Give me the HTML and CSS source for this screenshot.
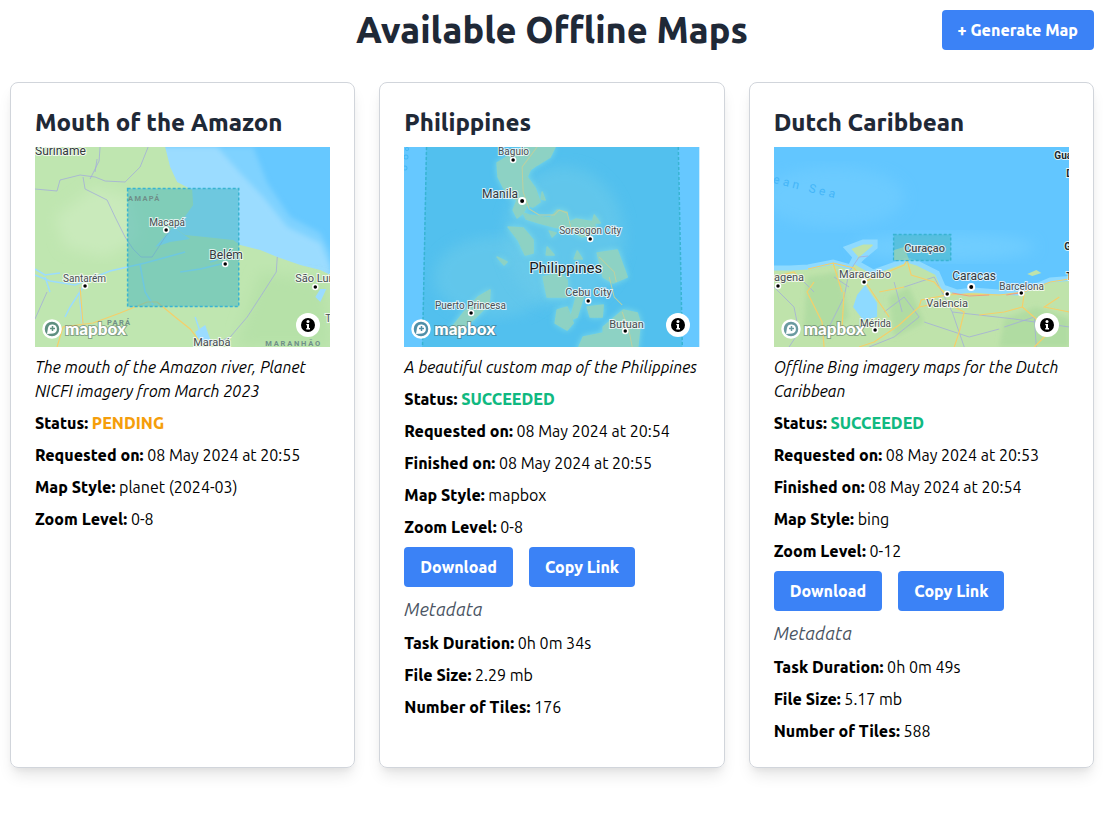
FILE: index.html
```html
<!DOCTYPE html>
<html>
	<head>
		<meta charset="UTF-8">
		<title>Available Offline Maps</title>
		<link rel="stylesheet" href="styles.css">
	</head>
	<body>
		<svg class="defs" width="0" height="0">
			<filter id="soft"><feGaussianBlur stdDeviation="0.4"/></filter>
			<filter id="blur"><feGaussianBlur stdDeviation="2.500"/></filter>
			<filter id="haze"><feGaussianBlur stdDeviation="7"/></filter>
		</svg>
		<header class="topbar">
			<h1>Available Offline Maps</h1>
			<button class="btn generate">+ Generate Map</button>
		</header>
		<main class="cards">
			<section class="card">
				<h2>Mouth of the Amazon</h2>
				<div class="map">
					<svg viewBox="0 0 295 200" preserveAspectRatio="none" width="100%" height="200">
						<rect width="295" height="200" fill="#66c8ff"/>
						<path d="M218 0L232 36L255 70L285 86L295 106V200H0V0Z" fill="#7fd2ff" filter="url(#blur)"/>
						<path d="M182 0L205 26L228 50L252 80L285 96L295 120V200H0V0Z" fill="#9bdcff" filter="url(#blur)"/>
						<g filter="url(#soft)">
							<path d="M130 0L135 20L142 35L157 43L158 58L148 72L138 80L150 88L170 90L198 93L205 98L225 103L242 110L265 118L285 123L295 128V200H0V0Z" fill="#bfe6b0"/>
							<path d="M60 40L95 50L105 90L70 110L30 100L20 70Z" fill="#c9eabb" filter="url(#haze)"/>
							<path d="M225 125L290 135L295 200H200Z" fill="#b6e1a8" filter="url(#haze)"/>
							<path d="M0 128L15 134L40 138L75 124L110 116L150 105" class="river"/>
							<path d="M45 140L45 155L48 180M48 140L35 160L30 170M105 118L110 145L118 158M145 125L165 122L190 116M175 115L190 110M160 170L165 185L178 195M10 130L15 145M0 122L10 128L25 126" class="river"/>
							<path d="M160 185L170 178L176 195L165 198Z" fill="#9bdcff"/>
							<path d="M280 150L285 142L291 142L285 155Z" fill="#9bdcff"/>
							<path d="M120 100L138 80L155 92L135 95Z" fill="#9bdcff"/>
							<g class="border">
								<path d="M0 42L22 44L25 33L45 28L60 30L70 34L90 35L105 20L113 0"/>
								<path d="M48 30L50 42L72 53L80 70L90 90L98 102L106 110L117 110L130 90L135 84"/>
								<path d="M65 0L64 14L55 32M62 12L60 25"/>
								<path d="M242 110L241 125L225 150L212 170L195 190L170 200"/>
								<path d="M0 172L12 145"/>
							</g>
							<path class="road" d="M22 200L28 180L58 176L85 166L112 155L122 155L140 170L155 182L165 195L175 200M45 140L48 178"/>
						</g>
						<rect class="bbox" x="92.500" y="41.500" width="111" height="118"/>
						<text class="region" x="93" y="54">AMAPÁ</text>
						<text class="region" x="72" y="178">PARÁ</text>
						<text class="region wide" x="230" y="199">MARANHÃO</text>
						<text class="place" x="114" y="79">Macapá</text>
						<circle class="dot" cx="131" cy="83" r="2.500"/>
						<text class="place big" x="174" y="112">Belém</text>
						<circle class="dot" cx="190" cy="117" r="2.500"/>
						<text class="place" x="28" y="135">Santarém</text>
						<circle class="dot" cx="50" cy="139" r="2.500"/>
						<text class="place big-sm" x="260" y="135">São Luís</text>
						<circle class="dot" cx="280" cy="140" r="2.500"/>
						<text class="place big-sm" x="158" y="199">Marabá</text>
						<text class="place big" x="0" y="8">Suriname</text>
						<text class="place" x="290" y="175">T</text>
					</svg>
					<div class="logo">
						<svg class="logo-mark" viewBox="0 0 20 20" width="20" height="20"><circle cx="10" cy="10" r="8.500" fill="#5f8f80" stroke="white" stroke-width="2.500"/><path d="M5 15L6 9A4.500 4.500 0 1 1 11 14.500Z" fill="white"/><path d="M10.500 7V12M8 9.500H13" stroke="#5f8f80" stroke-width="1.500"/></svg>
						<span class="logo-text">mapbox</span>
					</div>
					<svg class="info" viewBox="0 0 24 24" width="24" height="24"><circle cx="12" cy="12" r="12" fill="white"/><circle cx="12" cy="12" r="7" fill="black"/><circle cx="12" cy="8.500" r="1.500" fill="white"/><path d="M10.300 11H13V15H14V16.500H10.300V15H11V12.300H10.300Z" fill="white"/></svg>
				</div>
				<p class="desc">The mouth of the Amazon river, Planet NICFI imagery from March 2023</p>
				<p><b>Status:</b> <b class="pending">PENDING</b></p>
				<p><b>Requested on:</b> 08 May 2024 at 20:55</p>
				<p><b>Map Style:</b> planet (2024-03)</p>
				<p><b>Zoom Level:</b> 0-8</p>
			</section>
			<section class="card">
				<h2>Philippines</h2>
				<div class="map">
					<svg viewBox="0 0 295 200" preserveAspectRatio="none" width="100%" height="200">
						<rect width="295" height="200" fill="#66c8ff"/>
						<path d="M22 0L18 200H278L274 0Z" fill="#52c0ee"/>
						<ellipse cx="90" cy="130" rx="60" ry="40" fill="#6ccbea" opacity=".6" filter="url(#haze)"/>
						<ellipse cx="160" cy="90" rx="60" ry="70" fill="#6ccbea" opacity=".6" filter="url(#haze)"/>
						<g class="isles">
							<path d="M136 0L151 0L146 10L133 18L126 23L123 30L131 41L136 55L129 60L123 58L119 66L113 71L109 63L113 53L106 50L99 40L94 30L93 16L98 13L109 6L123 0Z"/>
							<path d="M119 66L125 68L146 71L153 63L163 65L163 76L172 72L190 75L192 85L178 90L170 85L160 82L150 80L135 76L122 72Z"/>
							<path d="M104 80L119 81L129 93L129 106L121 108L114 93Z"/>
							<path d="M193 106L213 103L223 130L209 136L199 130Z"/>
							<path d="M139 130L156 126L163 133L163 150L143 150Z"/>
							<path d="M173 146L179 150L173 170L166 173Z"/>
							<path d="M183 160L199 158L198 170L186 170Z"/>
							<path d="M153 163L163 160L169 176L163 183L151 176Z"/>
							<path d="M199 180L219 163L233 166L236 176L233 204H173L179 190L199 186Z"/>
							<path d="M86 143L74 150L60 165L46 183L52 187L70 172L85 157Z"/>
							<path d="M93 110L103 115L100 118ZM138 45L141 53L137 52ZM190 68L196 76L188 76ZM173 104L178 112L170 112ZM143 100L150 108L142 108ZM145 84L152 86L148 90Z"/>
						</g>
						<path class="road-muted" d="M133 0L118 20L119 45L125 62L135 68L150 68L155 63L163 66L167 82M195 110L210 125L212 135M205 130L210 150L218 158M218 165L225 185L228 200"/>
						<g class="speck">
							<circle cx="3" cy="2" r="1.500"/><circle cx="2" cy="10" r="2"/><circle cx="1" cy="21" r="2"/>
						</g>
						<path class="bbox" d="M22.500 0L18.500 200M274 0L278 200"/>
						<text class="place" x="94" y="8">Baguio</text>
						<circle class="dot" cx="109" cy="13" r="2.500"/>
						<text class="place big" x="78" y="51">Manila</text>
						<circle class="capital" cx="118" cy="54" r="3"/>
						<text class="place" x="155" y="87">Sorsogon City</text>
						<circle class="dot" cx="186" cy="92" r="2.500"/>
						<text class="place large" x="125" y="126">Philippines</text>
						<text class="place big-sm" x="161" y="149">Cebu City</text>
						<circle class="dot" cx="184" cy="154" r="2.500"/>
						<text class="place" x="31" y="162">Puerto Princesa</text>
						<circle class="dot" cx="67" cy="166" r="2.500"/>
						<text class="place big-sm" x="205" y="181">Butuan</text>
						<circle class="dot" cx="221" cy="184" r="2.500"/>
					</svg>
					<div class="logo">
						<svg class="logo-mark" viewBox="0 0 20 20" width="20" height="20"><circle cx="10" cy="10" r="8.500" fill="#4f8fa8" stroke="white" stroke-width="2.500"/><path d="M5 15L6 9A4.500 4.500 0 1 1 11 14.500Z" fill="white"/><path d="M10.500 7V12M8 9.500H13" stroke="#4f8fa8" stroke-width="1.500"/></svg>
						<span class="logo-text">mapbox</span>
					</div>
					<svg class="info" viewBox="0 0 24 24" width="24" height="24"><circle cx="12" cy="12" r="12" fill="white"/><circle cx="12" cy="12" r="7" fill="black"/><circle cx="12" cy="8.500" r="1.500" fill="white"/><path d="M10.300 11H13V15H14V16.500H10.300V15H11V12.300H10.300Z" fill="white"/></svg>
				</div>
				<p class="desc">A beautiful custom map of the Philippines</p>
				<p><b>Status:</b> <b class="succeeded">SUCCEEDED</b></p>
				<p><b>Requested on:</b> 08 May 2024 at 20:54</p>
				<p><b>Finished on:</b> 08 May 2024 at 20:55</p>
				<p><b>Map Style:</b> mapbox</p>
				<p><b>Zoom Level:</b> 0-8</p>
				<div class="actions">
					<button class="btn">Download</button>
					<button class="btn">Copy Link</button>
				</div>
				<h3>Metadata</h3>
				<p><b>Task Duration:</b> 0h 0m 34s</p>
				<p><b>File Size:</b> 2.29 mb</p>
				<p><b>Number of Tiles:</b> 176</p>
			</section>
			<section class="card">
				<h2>Dutch Caribbean</h2>
				<div class="map">
					<svg viewBox="0 0 295 200" preserveAspectRatio="none" width="100%" height="200">
						<rect width="295" height="200" fill="#62c6ff"/>
						<ellipse cx="60" cy="50" rx="70" ry="30" fill="#6ccbff" filter="url(#haze)"/>
						<ellipse cx="170" cy="100" rx="90" ry="14" fill="#70cdff" filter="url(#haze)"/>
						<path class="coast" d="M-5 121L16 121L34 120L59 115L76 120L81 110L73 101L89 95L101 95L101 100L89 110L83 116L99 125L133 113L143 116L163 126L169 140L183 145L199 143L224 145L243 146L259 140L276 133L300 131V205H-5Z"/>
						<g filter="url(#soft)">
							<g fill="#b0dca2" filter="url(#blur)">
								<path d="M33 130L65 125L75 170L50 192L30 180Z"/>
								<path d="M230 172L262 160L295 172V200H225Z"/>
								<path d="M115 150L135 140L150 175L120 190Z"/>
							</g>
							<path d="M91 138L103 156L103 170L89 173L79 160L83 148Z" fill="#8edaff"/>
							<path d="M253 127L262 123L267 126L258 129Z" fill="#bfe3ab"/>
							<g class="border">
								<path d="M94 109L85 110L75 125L70 150L60 170L50 190"/>
								<path d="M0 140L20 160L25 185L15 200M25 130L40 145M110 165L130 150L145 170L120 190L95 200"/>
								<path d="M130 140L160 130L178 165L190 200M178 165L240 172L295 180M230 180L260 170L262 200"/>
								<path d="M150 175L195 190L225 182M60 130L75 140M120 135L128 165"/>
							</g>
							<g class="road">
								<path d="M34 122L59 116L80 121L90 133L100 148L115 170M90 135L130 118L133 113L137 128L160 135L172 148L147 153L145 160L125 178L100 195L85 200"/>
								<path d="M172 148L195 147L225 148L250 145L276 135L295 132M250 146L248 160L262 172L275 185L260 200"/>
								<path d="M145 160L170 155L190 165L185 185L180 200M205 168L230 165L248 160M40 135L33 145L48 175L50 200"/>
								<path d="M70 145L68 180M59 116L68 145M105 145L130 140M0 130L20 125L28 135M285 150L270 160L295 165"/>
							</g>
							<path class="road road-red" d="M178 146L195 149L215 148M232 148L245 146"/>
						</g>
						<text class="sea" transform="rotate(14 0 30)" x="0" y="36">ean Sea</text>
						<rect class="bbox" x="119.500" y="87.500" width="57" height="26"/>
						<path d="M120 113L120 103L130 100L135 113Z" fill="#a0d6b0" opacity=".7"/>
						<text class="place medium" x="130" y="105">Curaçao</text>
						<text class="place big-sm" x="0" y="134">agena</text>
						<circle class="dot" cx="4" cy="139" r="2.500"/>
						<text class="place big-sm" x="65" y="131">Maracaibo</text>
						<circle class="dot" cx="90" cy="135" r="2.500"/>
						<text class="place big" x="178" y="133">Caracas</text>
						<circle class="capital" cx="197" cy="140" r="3"/>
						<text class="place" x="225" y="143">Barcelona</text>
						<circle class="dot" cx="247" cy="146" r="2.500"/>
						<circle class="dot" cx="173" cy="147" r="2.500"/>
						<text class="place big-sm" x="152" y="160">Valencia</text>
						<text class="place" x="86" y="180">Mérida</text>
						<circle class="dot" cx="101" cy="183" r="2.500"/>
						<text class="place dark" x="280" y="12">Gua</text>
						<text class="place dark" x="292" y="30">D</text>
						<text class="place dark" x="290" y="103">G</text>
						<text class="place dark" x="292" y="133">T</text>
					</svg>
					<div class="logo">
						<svg class="logo-mark" viewBox="0 0 20 20" width="20" height="20"><circle cx="10" cy="10" r="8.500" fill="#6a9aa0" stroke="white" stroke-width="2.500"/><path d="M5 15L6 9A4.500 4.500 0 1 1 11 14.500Z" fill="white"/><path d="M10.500 7V12M8 9.500H13" stroke="#6a9aa0" stroke-width="1.500"/></svg>
						<span class="logo-text">mapbox</span>
					</div>
					<svg class="info" viewBox="0 0 24 24" width="24" height="24"><circle cx="12" cy="12" r="12" fill="white"/><circle cx="12" cy="12" r="7" fill="black"/><circle cx="12" cy="8.500" r="1.500" fill="white"/><path d="M10.300 11H13V15H14V16.500H10.300V15H11V12.300H10.300Z" fill="white"/></svg>
				</div>
				<p class="desc">Offline Bing imagery maps for the Dutch Caribbean</p>
				<p><b>Status:</b> <b class="succeeded">SUCCEEDED</b></p>
				<p><b>Requested on:</b> 08 May 2024 at 20:53</p>
				<p><b>Finished on:</b> 08 May 2024 at 20:54</p>
				<p><b>Map Style:</b> bing</p>
				<p><b>Zoom Level:</b> 0-12</p>
				<div class="actions">
					<button class="btn">Download</button>
					<button class="btn">Copy Link</button>
				</div>
				<h3>Metadata</h3>
				<p><b>Task Duration:</b> 0h 0m 49s</p>
				<p><b>File Size:</b> 5.17 mb</p>
				<p><b>Number of Tiles:</b> 588</p>
			</section>
		</main>
	</body>
</html>
```

FILE: styles.css
```css
* {
	box-sizing: border-box;
}
body {
	min-height: 100vh;
	margin: 0;
	padding: 10px 9px 10px 10px;
	background-color: white;
	color: black;
	font: 16px/24px "Ubuntu", "Noto Sans", sans-serif;
}
b {
	font-weight: 800;
}
.defs {
	position: absolute;
}
.topbar {
	position: relative;
	height: 40px;
	margin-bottom: 32px;
}
h1 {
	margin: 0;
	text-align: center;
	color: #1f2937;
	font-size: 36px;
	line-height: 40px;
	font-weight: 800;
}
.generate {
	position: absolute;
	top: 0;
	right: 0;
}
.btn {
	height: 40px;
	padding: 0 16px;
	border: none;
	border-radius: 4px;
	background-color: #3b82f6;
	color: white;
	font: 800 16px/24px "Ubuntu", "Noto Sans", sans-serif;
}
.cards {
	display: grid;
	grid-template-columns: repeat(3, 1fr);
	gap: 24px;
}
.card {
	padding: 24px;
	border: 1px solid #d1d5db;
	border-radius: 8px;
	box-shadow: 0 10px 15px -3px rgba(0, 0, 0, .1), 0 4px 6px -2px rgba(0, 0, 0, .05);
}
h2 {
	margin: 0 0 8px;
	color: #1f2937;
	font-size: 24px;
	line-height: 32px;
	font-weight: 800;
}
h3 {
	margin: 8px 0;
	color: #4b5563;
	font-size: 18px;
	line-height: 28px;
	font-style: italic;
	font-weight: 400;
	letter-spacing: .1px;
}
p {
	margin: 0 0 8px;
}
p:last-child {
	margin-bottom: 0;
}
.desc {
	font-style: italic;
	letter-spacing: .04px;
}
.pending {
	color: #f59e0b;
}
.succeeded {
	color: #10b981;
}
.actions {
	display: flex;
	gap: 16px;
}
.map {
	position: relative;
	height: 200px;
	margin-bottom: 8px;
	overflow: hidden;
}
.map > svg {
	display: block;
}
.coast {
	fill: #bfe3ab;
	stroke: #8edaff;
	stroke-width: 5;
}
.river {
	fill: none;
	stroke: #9bdcff;
	stroke-width: 1.5;
}
.border {
	fill: none;
	stroke: #a3add9;
	stroke-width: .8;
}
.road {
	fill: none;
	stroke: #f5cf6a;
	stroke-width: 1.2;
}
.road-red {
	stroke: #f0a080;
}
.road-muted {
	fill: none;
	stroke: #bcd0a0;
	stroke-width: 1;
}
.isles {
	fill: #8dd2c4;
	stroke: #8dd2c4;
	stroke-width: 1.500;
	stroke-linejoin: round;
	filter: blur(.7px) drop-shadow(0 0 3px #7fdbe6);
}
.speck {
	fill: none;
	stroke: #44b8f5;
}
.bbox {
	fill: rgba(65, 180, 192, .5);
	stroke: #38b4d2;
	stroke-width: 1.5;
	stroke-dasharray: 3 2;
}
path.bbox {
	fill: none;
}
.place {
	fill: #484e52;
	stroke: rgba(255, 255, 255, .75);
	stroke-width: 2;
	paint-order: stroke;
	font: 10px "Roboto", sans-serif;
}
.dark {
	fill: #20262a;
	font-weight: 700;
}
.medium {
	font-size: 11px;
	font-weight: 500;
}
.big {
	fill: #33393d;
	font-size: 12px;
}
.big-sm {
	font-size: 11px;
}
.large {
	fill: #15191c;
	font-size: 15px;
}
.region {
	fill: #6f8f88;
	font: 700 7.500px "Roboto", sans-serif;
	letter-spacing: 1.300px;
}
.wide {
	letter-spacing: 1.800px;
}
.sea {
	fill: #45b6f8;
	font: 12px "Roboto", sans-serif;
	letter-spacing: 3.500px;
}
.dot {
	fill: black;
	stroke: white;
	stroke-width: 1.500;
}
.capital {
	fill: black;
	stroke: white;
	stroke-width: 2;
}
.logo {
	position: absolute;
	left: 7px;
	bottom: 8px;
	display: flex;
	align-items: center;
	gap: 3px;
}
.logo-text {
	color: white;
	-webkit-text-stroke: 2px rgba(60, 80, 80, .45);
	paint-order: stroke fill;
	font: 900 17px/20px "Lato", sans-serif;
}
.info {
	position: absolute;
	right: 10px;
	bottom: 10px;
}
```
